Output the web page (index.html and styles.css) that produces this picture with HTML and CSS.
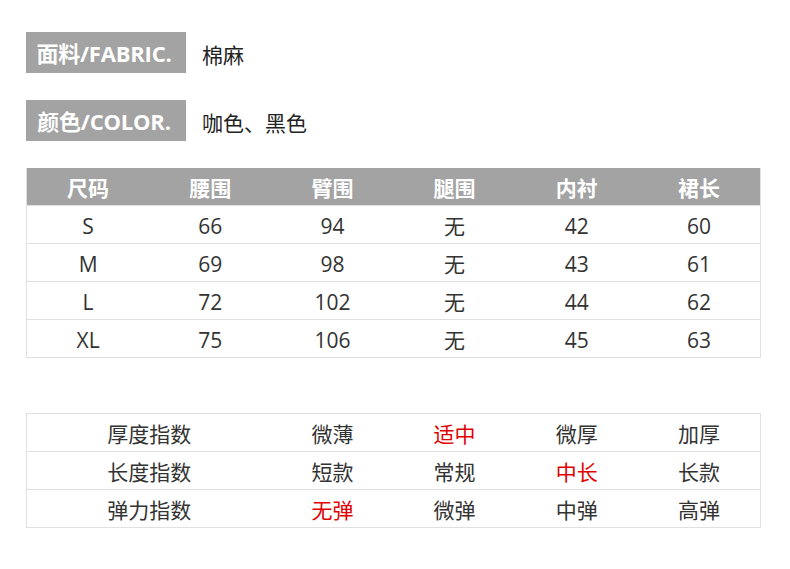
FILE: index.html
```html
<!DOCTYPE html>
<html lang="zh">
<head>
<meta charset="utf-8">
<link rel="stylesheet" href="styles.css">
</head>
<body>
<div class="page">
  <div class="info">
    <div class="label">面料/FABRIC.</div>
    <div class="value">棉麻</div>
  </div>
  <div class="info">
    <div class="label">颜色/COLOR.</div>
    <div class="value">咖色、黑色</div>
  </div>
  <div class="size-table">
    <div class="row head">
      <div class="cell">尺码</div><div class="cell">腰围</div><div class="cell">臂围</div><div class="cell">腿围</div><div class="cell">内衬</div><div class="cell">裙长</div>
    </div>
    <div class="row"><div class="cell">S</div><div class="cell">66</div><div class="cell">94</div><div class="cell">无</div><div class="cell">42</div><div class="cell">60</div></div>
    <div class="row"><div class="cell">M</div><div class="cell">69</div><div class="cell">98</div><div class="cell">无</div><div class="cell">43</div><div class="cell">61</div></div>
    <div class="row"><div class="cell">L</div><div class="cell">72</div><div class="cell">102</div><div class="cell">无</div><div class="cell">44</div><div class="cell">62</div></div>
    <div class="row"><div class="cell">XL</div><div class="cell">75</div><div class="cell">106</div><div class="cell">无</div><div class="cell">45</div><div class="cell">63</div></div>
  </div>
  <div class="index-table">
    <div class="row"><div class="cell wide">厚度指数</div><div class="cell">微薄</div><div class="cell red">适中</div><div class="cell">微厚</div><div class="cell">加厚</div></div>
    <div class="row"><div class="cell wide">长度指数</div><div class="cell">短款</div><div class="cell">常规</div><div class="cell red">中长</div><div class="cell">长款</div></div>
    <div class="row"><div class="cell wide">弹力指数</div><div class="cell red">无弹</div><div class="cell">微弹</div><div class="cell">中弹</div><div class="cell">高弹</div></div>
  </div>
</div>
</body>
</html>
```
FILE: styles.css
```css
html, body {
  margin: 0;
  padding: 0;
  background: #fff;
}
body {
  font-family: "Open Sans", "Noto Sans CJK SC", sans-serif;
  color: #333;
}
.page {
  width: 735px;
  padding: 32px 0 0 26px;
}
.info {
  display: flex;
  align-items: center;
  height: 41px;
  margin-bottom: 27px;
}
.label {
  width: 160px;
  height: 41px;
  padding-right: 4px;
  box-sizing: border-box;
  background: #a3a3a3;
  color: #fff;
  font-weight: bold;
  font-size: 22px;
  line-height: 43px;
  text-align: center;
  letter-spacing: -0.2px;
}
.value {
  margin-left: 16px;
  padding-top: 2px;
  font-size: 21px;
  color: #222;
}
.size-table {
  border: 1px solid #e0e0e0;
  border-top: none;
}
.size-table .row,
.index-table .row {
  display: grid;
  grid-template-columns: repeat(6, 1fr);
  height: 38px;
  align-items: center;
  border-top: 1px solid #e0e0e0;
  box-sizing: border-box;
}
.size-table .row.head {
  background: #a3a3a3;
  color: #fff;
  font-weight: bold;
  border-top: none;
  height: 37px;
}
.cell {
  text-align: center;
  font-size: 21px;
  line-height: 40px;
  height: 37px;
}
.index-table {
  margin-top: 55px;
  border: 1px solid #e0e0e0;
  border-top: none;
}
.index-table .cell.wide {
  grid-column: span 2;
}
.red {
  color: #e00000;
}
```
